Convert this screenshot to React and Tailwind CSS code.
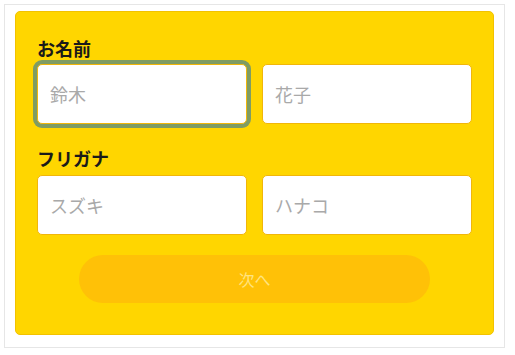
import React from "react";

const jp = { fontFamily: '"Noto Sans CJK JP", "Noto Sans", sans-serif' };

function Field({ placeholder, focused }) {
  return (
    <input
      type="text"
      placeholder={placeholder}
      readOnly
      className={`h-[60px] w-full rounded-[5px] border border-[#f1b60a] bg-white px-3 text-[18px] text-[#333] outline-none placeholder:text-[#a9a9a9] ${
        focused ? "ring-4 ring-[#7f9c63]" : ""
      }`}
      style={jp}
    />
  );
}

export default function App() {
  return (
    <div className="min-h-screen bg-white p-[4px]" style={jp}>
      <div className="w-[501px] border border-[#e6e6e6] bg-white px-[10px] pb-[12px] pt-[6px]">
        <div className="rounded-[5px] border border-[#f2c200] bg-[#ffd600] px-[21px] pb-[31px] pt-[24px]">
          <div className="text-[18px] font-bold leading-6 text-[#1a1a1a]">お名前</div>
          <div className="mt-[4px] grid grid-cols-2 gap-[15px]">
            <Field placeholder="鈴木" focused />
            <Field placeholder="花子" />
          </div>

          <div className="mt-[22px] text-[18px] font-bold leading-6 text-[#1a1a1a]">フリガナ</div>
          <div className="mt-[5px] grid grid-cols-2 gap-[15px]">
            <Field placeholder="スズキ" />
            <Field placeholder="ハナコ" />
          </div>

          <div className="mt-[20px] flex justify-center">
            <button
              type="button"
              className="h-[48px] w-[351px] rounded-full bg-[#ffc107] text-[16px] text-[#ffe480]"
              style={jp}
            >
              次へ
            </button>
          </div>
        </div>
      </div>
    </div>
  );
}
